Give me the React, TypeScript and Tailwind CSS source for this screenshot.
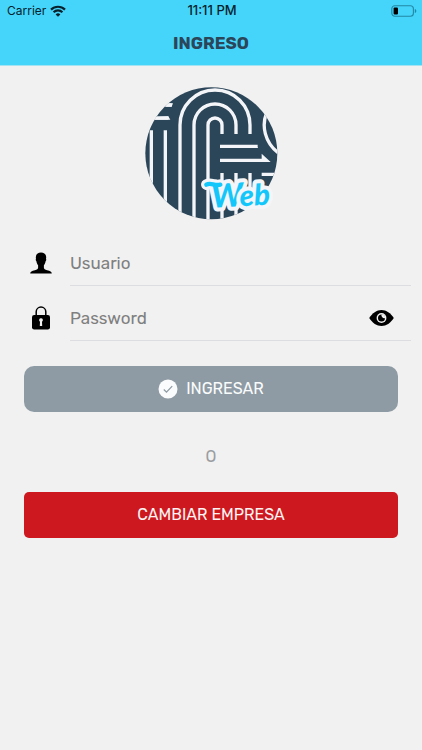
import { useState } from "react";

function WifiIcon() {
  return (
    <svg viewBox="0 0 16 12" className="h-3 w-4" aria-hidden="true">
      <g fill="none" stroke="#06222c" strokeWidth="2.2">
        <path d="M1 4.6a10 10 0 0 1 14 0" />
        <path d="M3.6 7.3a6.2 6.2 0 0 1 8.8 0" />
      </g>
      <path d="M8 11.8 5.6 9.4a3.4 3.4 0 0 1 4.8 0z" fill="#06222c" />
    </svg>
  );
}

function BatteryIcon() {
  return (
    <svg viewBox="0 0 26 12" className="h-3 w-[26px]" aria-hidden="true">
      <rect x="0.8" y="0.8" width="21.6" height="10.4" rx="3" fill="none" stroke="#2388a5" strokeWidth="1.1" />
      <rect x="2.6" y="2.4" width="4.4" height="7.2" rx="1" fill="#000" />
      <path d="M23.8 4v4c1-.4 1.5-1.1 1.5-2s-.5-1.6-1.5-2z" fill="#2388a5" />
    </svg>
  );
}

function Logo() {
  return (
    <svg viewBox="14 20 399 399" className="size-[133px] overflow-visible" role="img" aria-label="Web">
      <defs>
        <clipPath id="disc">
          <circle cx="213" cy="219" r="198" />
        </clipPath>
      </defs>
      <g clipPath="url(#disc)">
        <rect x="14" y="20" width="399" height="399" fill="#2b4559" />
        <g fill="none" stroke="#f4f5f8" strokeWidth="10">
          <path d="M119 420V134a105 105 0 0 1 210 0v27" />
          <path d="M161 420V134a63 63 0 0 1 126 0v27" />
          <path d="M203 420V134a21 21 0 0 1 42 0v27" />
          <path d="M33 420V150M75 420V150" />
          <path d="M30 113H84M60 74H94" />
          <path d="M239 198H352M239 240H375M364 282H412" />
          <path d="M245 278V420M287 278V420M329 278V420" />
          <path d="M378 100C364 135 372 185 414 218" />
        </g>
        <path d="M14 113 84 108 90 118H14zM76 79 84 69H98L94 79z" fill="#f4f5f8" />
        <path d="M345 193 353 203H345zM364 220 391 245H364z" fill="#f4f5f8" />
        <path d="M14 290H33V420H14z" fill="#f4f5f8" />
      </g>
      <g strokeLinecap="round" strokeLinejoin="round">
        <path d="M198 313C212 305 222 318 240 313" fill="none" stroke="#f4f5f8" strokeWidth="32" />
        <g
          fontWeight="900"
          fontStyle="italic"
          fill="#14c7fb"
          stroke="#f4f5f8"
          strokeWidth="24"
          paintOrder="stroke"
          className="font-['Lato',sans-serif]"
          transform="rotate(-3 222 382)"
        >
          <text x="214" y="382" fontSize="88">
            <tspan fontSize="98">W</tspan>
            <tspan dx="-10">eb</tspan>
          </text>
        </g>
        <path d="M198 313C212 305 222 318 240 313" fill="none" stroke="#14c7fb" strokeWidth="13" />
      </g>
    </svg>
  );
}

function UserIcon() {
  return (
    <svg viewBox="0 0 22 22" className="size-[22px]" aria-hidden="true">
      <path d="M11 .5C7.600.5 5.700 2.600 5.800 5.600c0 .5.100 1 .200 1.400-.5.3-.3 1.800.4 2.300.3 1.900.9 3 1.700 3.900v2.500c0 1.200-1.100 1.900-3.200 2.500C1.800 19 .3 19.600.2 21.500h21.600c-.1-1.900-1.600-2.500-4.700-3.300-2.100-.6-3.200-1.300-3.200-2.500v-2.500c.8-.9 1.400-2 1.700-3.900.7-.5.9-2 .4-2.300.1-.4.2-.9.200-1.400C16.300 2.600 14.400.5 11 .5z" />
    </svg>
  );
}

function LockIcon() {
  return (
    <svg viewBox="0 0 18 24" className="h-6 w-[18px]" aria-hidden="true">
      <path d="M4.200 10V5.800a4.800 4.800 0 0 1 9.600 0V10" fill="none" stroke="#000" strokeWidth="1.500" />
      <rect x="0" y="9" width="18" height="14.500" rx="2.200" />
      <path d="M9 12.200a1.900 1.900 0 0 0-1 3.500L7.800 20h2.400L10 15.700a1.900 1.900 0 0 0-1-3.500z" fill="#f1f1f1" />
    </svg>
  );
}

function EyeIcon() {
  return (
    <svg viewBox="0 0 25 18" className="h-[18px] w-[25px]" aria-hidden="true">
      <path d="M.2 9C3.400 4 7.700 1 12.500 1s9.100 3 12.300 8c-3.200 5-7.500 8-12.300 8S3.400 14 .2 9z" />
      <circle cx="12.500" cy="9" r="4.900" fill="#f1f1f1" />
      <circle cx="12.500" cy="9" r="3.500" />
      <path d="M12.500 5.200c2.100 0 3.800 1.700 3.800 3.800-2 .8-4.500-1-3.800-3.800z" fill="#f1f1f1" />
    </svg>
  );
}

function CheckIcon() {
  return (
    <svg viewBox="0 0 20 20" className="size-5" aria-hidden="true">
      <circle cx="10" cy="10" r="9.500" fill="#fafbfc" />
      <path d="m5.800 10.500 2.700 2.600 5.700-6" fill="none" stroke="#8f9ba4" strokeWidth="1.300" />
    </svg>
  );
}

const inputStyle =
  "min-w-0 flex-1 bg-transparent text-[17px] leading-6 text-gray-800 outline-none placeholder:text-[#7f7f7f]";

export default function App() {
  const [visible, setVisible] = useState(false);
  return (
    <div className="min-h-screen bg-[#f1f1f1] font-['Rubik','Roboto',sans-serif]">
      <header className="border-b border-[#a5e2f2] bg-[#45d5fb]">
        <div className="grid h-[22px] grid-cols-3 items-center pr-[5px] pl-[7px] font-['Inter',sans-serif] text-[12px] text-[#06222c]">
          <div className="flex items-center gap-1">
            <span>Carrier</span>
            <WifiIcon />
          </div>
          <time className="text-center text-[13px] font-medium whitespace-nowrap">11:11 PM</time>
          <div className="flex justify-end">
            <BatteryIcon />
          </div>
        </div>
        <h1 className="pt-[9px] pb-2.5 text-center text-[17px] leading-6 font-bold text-[#2b4559]">INGRESO</h1>
      </header>

      <main>
        <div className="flex justify-center pt-[21px] pb-5">
          <Logo />
        </div>

        <form onSubmit={(event) => event.preventDefault()}>
          <div className="flex pr-[11px]">
            <label htmlFor="user" aria-label="Usuario" className="flex w-[70px] items-center justify-center pl-[11px]">
              <UserIcon />
            </label>
            <div className="flex h-[46px] min-w-0 flex-1 items-center border-b border-[#dcdde0]">
              <input id="user" type="text" placeholder="Usuario" className={inputStyle} />
            </div>
          </div>
          <div className="flex pt-[9px] pr-[11px]">
            <label htmlFor="password" aria-label="Password" className="flex w-[70px] items-center justify-center pl-[11px]">
              <LockIcon />
            </label>
            <div className="flex h-[46px] min-w-0 flex-1 items-center border-b border-[#dcdde0] pr-[17px]">
              <input
                id="password"
                type={visible ? "text" : "password"}
                placeholder="Password"
                className={inputStyle}
              />
              <button type="button" aria-label="Mostrar password" onClick={() => setVisible(!visible)}>
                <EyeIcon />
              </button>
            </div>
          </div>

          <div className="px-6 pt-[25px]">
            <button
              type="submit"
              className="flex h-[46px] w-full items-center justify-center gap-2 rounded-[10px] bg-[#8f9ba4] text-[16px] text-[#fafbfc]"
            >
              <CheckIcon />
              INGRESAR
            </button>
            <p className="pt-[33px] pb-[23px] text-center text-[16px] leading-6 text-[#9a9da1]">O</p>
            <button
              type="button"
              className="h-[46px] w-full rounded-[5px] bg-[#cd181f] text-[16px] text-[#fdf3f3]"
            >
              CAMBIAR EMPRESA
            </button>
          </div>
        </form>
      </main>
    </div>
  );
}
